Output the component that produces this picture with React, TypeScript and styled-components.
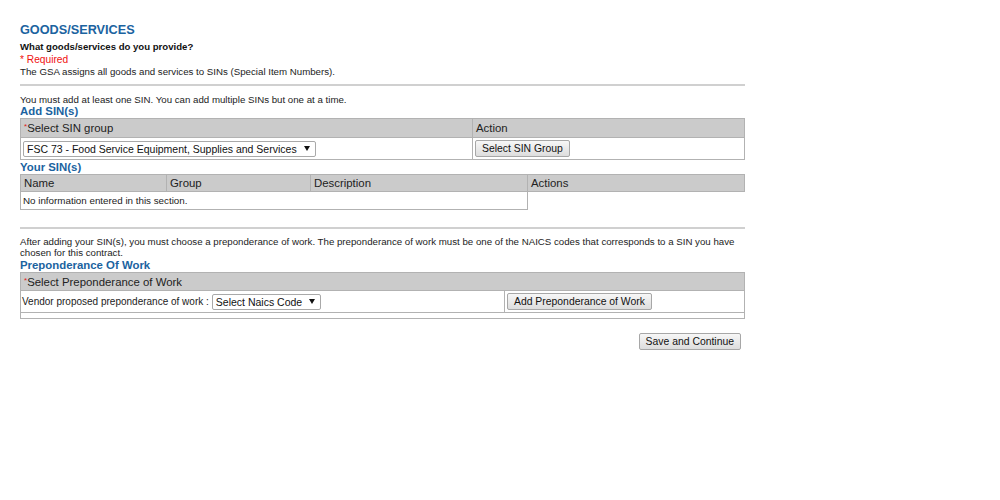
import React from "react";
import styled, { createGlobalStyle } from "styled-components";

const Global = createGlobalStyle`
  html, body { margin: 0; padding: 0; background: #fff; }
  body { font-family: "Liberation Sans", Arial, sans-serif; color: #222; }
  * { box-sizing: border-box; }
`;

const Page = styled.div`
  width: 745px;
  padding: 22px 0 0 20px;
`;

const Title = styled.h1`
  margin: 0;
  font-size: 12.7px;
  line-height: 16px;
  font-weight: bold;
  color: #1b63a0;
`;

const Question = styled.div`
  margin-top: 3px;
  font-size: 9.6px;
  line-height: 12px;
  font-weight: bold;
  color: #111;
`;

const Required = styled.div`
  font-size: 10.2px;
  line-height: 13px;
  color: #f01010;
`;

const Note = styled.div`
  font-size: 9.7px;
  line-height: 11px;
  color: #222;
`;

const Rule = styled.hr<{ $mt?: number; $mb?: number }>`
  margin: ${(p) => p.$mt ?? 7}px 0 ${(p) => p.$mb ?? 8}px;
  border: 0;
  height: 2px;
  background: #d0d0d0;
`;

const SectionTitle = styled.h2<{ $mt?: number }>`
  margin: ${(p) => p.$mt ?? 0}px 0 0;
  font-size: 11.4px;
  line-height: 13px;
  font-weight: bold;
  color: #1b63a0;
`;

const Table = styled.table`
  width: 100%;
  border-collapse: collapse;
  table-layout: fixed;
`;

const Col = styled.col<{ $w?: string }>`
  width: ${(p) => p.$w ?? "auto"};
`;

const Row = styled.tr<{ $h: number }>`
  height: ${(p) => p.$h}px;
`;

const HeadCell = styled.th`
  background: #cbcbcb;
  border: 1px solid #b2b2b2;
  text-align: left;
  font-weight: normal;
  font-size: 11.4px;
  padding: 0 3px;
  color: #222;
`;

const Star = styled.span`
  color: #e02020;
  font-size: 8px;
  vertical-align: top;
  line-height: 10px;
`;

const Cell = styled.td`
  border: 1px solid #b2b2b2;
  padding: 0 2px;
  font-size: 9.8px;
  color: #222;
`;

const EmptyCell = styled.td`
  border: 0;
  border-top: 1px solid #b2b2b2;
`;

const SelectBox = styled.span`
  display: inline-flex;
  align-items: center;
  gap: 7px;
  height: 16px;
  padding: 0 5px 0 3px;
  border: 1px solid #a9a9a9;
  border-radius: 2px;
  background: #fff;
  font-size: 10.5px;
  color: #111;
  vertical-align: middle;
`;

const Arrow = () => (
  <svg width="6" height="5" viewBox="0 0 6 5">
    <path d="M0 0h6L3 5z" fill="#111" />
  </svg>
);

const Button = styled.button`
  height: 17px;
  padding: 0 6px;
  border: 1px solid #a7a7a7;
  border-radius: 2px;
  background: linear-gradient(#f7f7f7, #dddddd);
  font-family: "Liberation Sans", Arial, sans-serif;
  font-size: 10.4px;
  color: #111;
  cursor: pointer;
  vertical-align: middle;
`;

const Label = styled.span`
  font-size: 10px;
  margin: 0 3px 0 -1px;
  vertical-align: middle;
`;

const Footer = styled.div`
  display: flex;
  justify-content: flex-end;
  padding: 14px 4px 0 0;
`;

export default function App() {
  return (
    <>
      <Global />
      <Page>
        <Title>GOODS/SERVICES</Title>
        <Question>What goods/services do you provide?</Question>
        <Required>* Required</Required>
        <Note>The GSA assigns all goods and services to SINs (Special Item Numbers).</Note>
        <Rule />
        <Note>You must add at least one SIN. You can add multiple SINs but one at a time.</Note>
        <SectionTitle>Add SIN(s)</SectionTitle>
        <Table>
          <colgroup>
            <Col $w="452px" />
            <Col />
          </colgroup>
          <thead>
            <Row $h={19}>
              <HeadCell>
                <Star>*</Star>Select SIN group
              </HeadCell>
              <HeadCell>Action</HeadCell>
            </Row>
          </thead>
          <tbody>
            <Row $h={22}>
              <Cell>
                <SelectBox>
                  FSC 73 - Food Service Equipment, Supplies and Services <Arrow />
                </SelectBox>
              </Cell>
              <Cell>
                <Button>Select SIN Group</Button>
              </Cell>
            </Row>
          </tbody>
        </Table>
        <SectionTitle $mt={1}>Your SIN(s)</SectionTitle>
        <Table>
          <colgroup>
            <Col $w="146px" />
            <Col $w="144px" />
            <Col $w="217px" />
            <Col />
          </colgroup>
          <thead>
            <Row $h={17}>
              <HeadCell>Name</HeadCell>
              <HeadCell>Group</HeadCell>
              <HeadCell>Description</HeadCell>
              <HeadCell>Actions</HeadCell>
            </Row>
          </thead>
          <tbody>
            <Row $h={18}>
              <Cell colSpan={3}>No information entered in this section.</Cell>
              <EmptyCell />
            </Row>
          </tbody>
        </Table>
        <Rule $mt={17} $mb={7} />
        <Note>
          After adding your SIN(s), you must choose a preponderance of work. The preponderance of work must be one of
          the NAICS codes that corresponds to a SIN you have chosen for this contract.
        </Note>
        <SectionTitle $mt={1}>Preponderance Of Work</SectionTitle>
        <Table>
          <colgroup>
            <Col $w="484px" />
            <Col />
          </colgroup>
          <thead>
            <Row $h={18}>
              <HeadCell colSpan={2}>
                <Star>*</Star>Select Preponderance of Work
              </HeadCell>
            </Row>
          </thead>
          <tbody>
            <Row $h={22}>
              <Cell>
                <Label>Vendor proposed preponderance of work :</Label>
                <SelectBox>
                  Select Naics Code <Arrow />
                </SelectBox>
              </Cell>
              <Cell>
                <Button>Add Preponderance of Work</Button>
              </Cell>
            </Row>
            <Row $h={6}>
              <Cell colSpan={2} />
            </Row>
          </tbody>
        </Table>
        <Footer>
          <Button>Save and Continue</Button>
        </Footer>
      </Page>
    </>
  );
}
